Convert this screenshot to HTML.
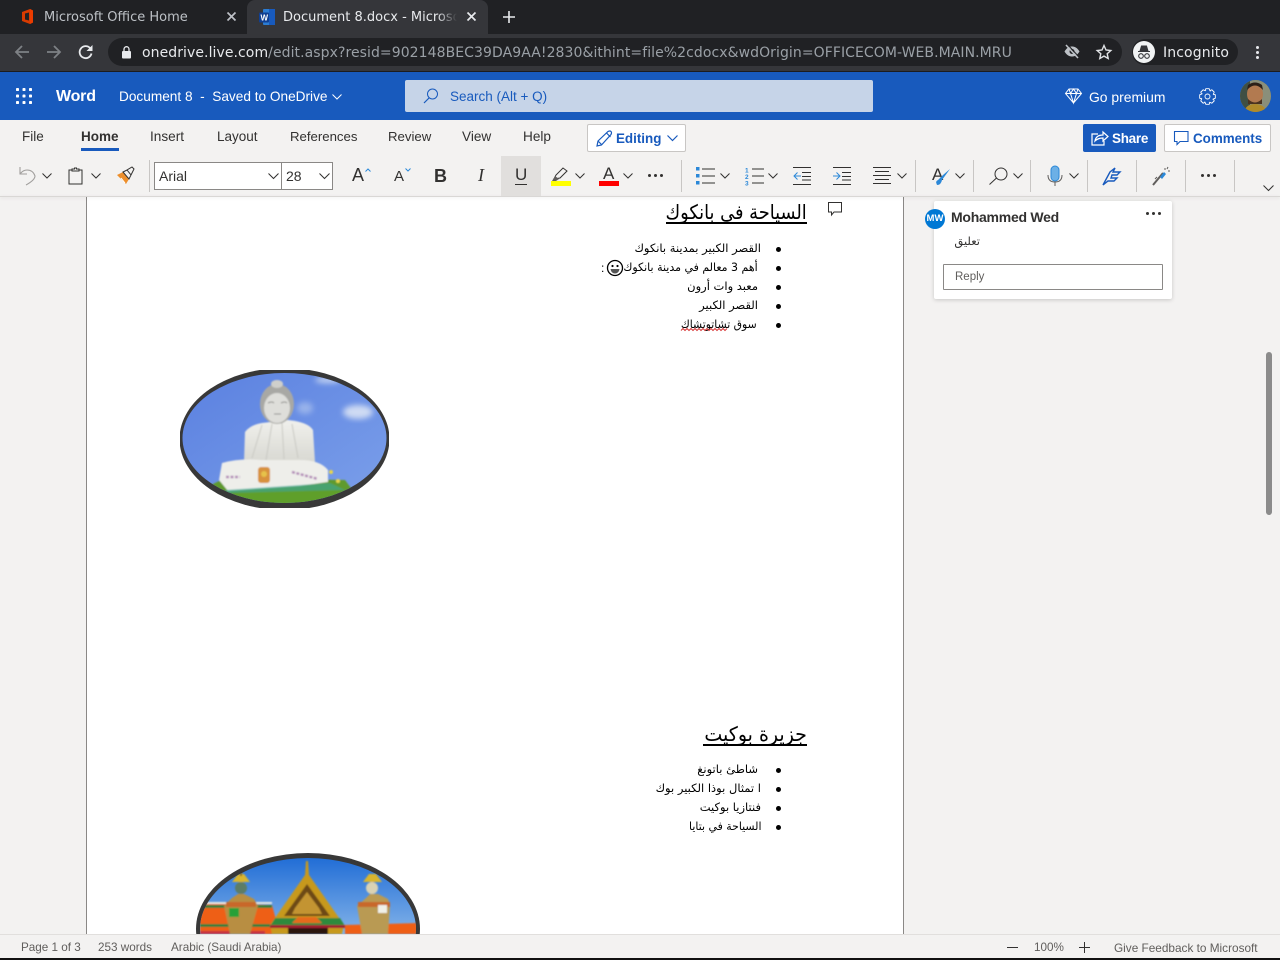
<!DOCTYPE html>
<html lang="en"><head><meta charset="utf-8"><title>Document 8.docx - Microsoft Word</title>
<style>
html,body{margin:0;padding:0;width:1280px;height:960px;overflow:hidden;background:#f3f2f1}
body{position:relative;font-family:"Liberation Sans",sans-serif;color:#323130}
.a{position:absolute}
.t{position:absolute;white-space:nowrap;line-height:20px}
.d{font-family:"DejaVu Sans",sans-serif}
.sep{position:absolute;width:1px;top:160px;height:32px;background:#c8c6c4}
svg{position:absolute;overflow:visible}
.ar{position:absolute;white-space:nowrap;direction:rtl;color:#000;font-family:"DejaVu Sans",sans-serif;transform-origin:right center;text-align:right}
.bul{position:absolute;width:5px;height:5px;border-radius:50%;background:#000;left:776px}
</style></head><body>

<!-- document area -->
<div class="a" style="left:86px;top:196px;width:818px;height:738px;background:#fff;border-left:1px solid #8a8886;border-right:1px solid #8a8886;box-sizing:border-box"></div>

<svg style="left:0;top:0" width="1280" height="960" viewBox="0 0 1280 960">
<defs>
<clipPath id="c1"><rect x="180" y="370" width="209" height="138"/></clipPath>
<clipPath id="c2"><ellipse cx="284.5" cy="438" rx="102" ry="65"/></clipPath>
<clipPath id="c3"><ellipse cx="308" cy="929" rx="108" ry="71"/></clipPath>
<linearGradient id="sky1" x1="0" y1="0" x2="1" y2="1"><stop offset="0" stop-color="#5a80e0"/><stop offset="1" stop-color="#7ca0ea"/></linearGradient>
<linearGradient id="sky2" x1="0" y1="0" x2="0" y2="1"><stop offset="0" stop-color="#1766d4"/><stop offset="1" stop-color="#8ab8ea"/></linearGradient>
<linearGradient id="body" x1="0" y1="0" x2="0" y2="1"><stop offset="0" stop-color="#f0f0ec"/><stop offset="1" stop-color="#d8d8d2"/></linearGradient>
<filter id="b1"><feGaussianBlur stdDeviation=".7"/></filter>
<filter id="b2"><feGaussianBlur stdDeviation="3"/></filter>
</defs>
<g clip-path="url(#c1)">
<ellipse cx="284.5" cy="439" rx="105" ry="71" fill="#383838"/>
<g clip-path="url(#c2)">
<rect x="180" y="370" width="210" height="140" fill="url(#sky1)"/>
<g filter="url(#b2)" fill="#dfe8f6"><ellipse cx="358" cy="412" rx="15" ry="7" opacity=".85"/><ellipse cx="328" cy="380" rx="13" ry="3" opacity=".8"/><ellipse cx="305" cy="408" rx="8" ry="6" opacity=".4"/></g>
<g filter="url(#b1)">
<path d="M205 488 L225 478 L345 480 L360 500 L330 510 L230 510Z" fill="#5e9a2e"/>
<path d="M244 462 L245 432 Q250 425 262 423 L288 420 Q308 422 313 430 L315 462Z" fill="url(#body)"/>
<path d="M262 425L252 458M272 424l-6 36M282 423l2 36M292 424l6 34" stroke="#c9c9c3" stroke-width="1" fill="none"/>
<path d="M222 463 Q240 458 262 460 L300 460 Q320 460 328 470 L328 482 L300 486 L228 491 L219 480Z" fill="#eeeeea"/>
<ellipse cx="277" cy="404" rx="17" ry="20" fill="#a8a8a4"/>
<ellipse cx="277" cy="408" rx="13" ry="15" fill="#dededa"/>
<ellipse cx="277" cy="384" rx="6" ry="4" fill="#cfcfcb"/>
<path d="M268 403q4-2 6 0M281 403q4-2 6 0M274 414h7" stroke="#8f8f8b" fill="none"/>
<rect x="258" y="467" width="12" height="16" rx="3" fill="#d8913c"/>
<circle cx="264" cy="474" r="3" fill="#e6c24a"/>
<path d="M226 477h14M292 472l26 7" stroke="#b38cb8" stroke-width="2.500" stroke-dasharray="3 1.500" fill="none"/>
<path d="M225 490 L330 483 L345 490 L230 495Z" fill="#3aa89a" opacity=".6"/>
<path d="M230 493 L340 490 L345 505 L240 510Z" fill="#5f9f2c"/>
<circle cx="331" cy="472" r="2" fill="#e8d54c"/><circle cx="338" cy="481" r="2" fill="#e8d54c"/>
</g></g></g>

<g>
<ellipse cx="308" cy="929" rx="112" ry="76" fill="#383838"/>
<g clip-path="url(#c3)">
<rect x="190" y="850" width="240" height="90" fill="url(#sky2)"/>
<g filter="url(#b1)">
<path d="M200 903 L272 905 L280 934 L200 934Z" fill="#ee5f12"/>
<path d="M345 925 L420 923 L420 934 L345 934Z" fill="#ee5f12"/>
<path d="M200 905h72v3h-72zM200 924h70v3h-70z" fill="#2f7f3a"/>
<path d="M200 902h72v2h-72z" fill="#e8e8e0"/>
<path d="M200 931h65v3h-65z" fill="#c8303c"/>
<path d="M306 861h2l1 14 35 50-2 9h-70l-2-9 35-50z" fill="#c7991f"/>
<path d="M307 884 L330 916 L284 916Z" fill="#6d4a12"/>
<path d="M295 908 L307 892 L319 908 L322 914 L292 914Z" fill="#c39432"/>
<path d="M275 918 L340 918 L345 926 L270 926Z" fill="#2f8a3c"/>
<path d="M298 917 L316 917 L322 923 L292 923Z" fill="#e66a1c"/>
<path d="M270 925h75v3h-75z" fill="#a01c30"/>
<path d="M288 928h40v6h-40z" fill="#2a130c"/>
<path d="M230 934 L224 906 L232 898 L238 894 L244 894 L254 899 L258 906 L250 934Z" fill="#b88e42"/>
<path d="M226 902h30v5h-30z" fill="#c8682a"/>
<circle cx="241" cy="888" r="6" fill="#5d7d66"/>
<path d="M232 882 L238 874 L244 874 L250 882Z" fill="#d9b52e"/>
<path d="M241 871v5" stroke="#8a6b20" stroke-width="2"/>
<rect x="229" y="908" width="10" height="9" fill="#28a038"/>
<path d="M362 934 L357 906 L366 898 L370 894 L378 894 L388 899 L390 906 L388 934Z" fill="#b99a52"/>
<path d="M358 902h32v5h-32z" fill="#c8682a"/>
<circle cx="372" cy="888" r="6" fill="#d9d2b4"/>
<path d="M363 882 L369 874 L376 874 L382 882Z" fill="#d9b52e"/>
<rect x="378" y="905" width="9" height="8" fill="#f0f0e8"/>
</g></g></g>
</svg>

<!-- doc text -->
<div class="ar" style="right:473px;top:199px;font-size:20px;line-height:26px;transform:scaleX(.89)">السياحة في بانكوك</div>
<div class="a" style="left:666px;top:222px;width:141px;height:2px;background:#000"></div>
<svg style="left:828px;top:202px" width="16" height="15"><path d="M.5.500h13v9.500H6L3.500 13V10H.5z" fill="#fff" stroke="#323130"/></svg>

<div class="bul" style="top:247px"></div><div class="bul" style="top:266px"></div><div class="bul" style="top:285px"></div><div class="bul" style="top:304px"></div><div class="bul" style="top:323px"></div>
<div class="ar" style="right:519px;top:240px;font-size:11.5px;line-height:16px">القصر الكبير بمدينة بانكوك</div>
<div class="ar" style="right:522px;top:259px;font-size:11.5px;line-height:16px;transform:scaleX(.955)">أهم 3 معالم في مدينة بانكوك</div>
<svg style="left:606px;top:259px" width="18" height="18"><circle cx="9" cy="9" r="7.500" fill="#fff" stroke="#000" stroke-width="1.300"/><circle cx="6.500" cy="7" r="1.100"/><circle cx="11.500" cy="7" r="1.100"/><path d="M4.500 10h9c-.5 3-2.300 4.500-4.500 4.500S5 13 4.500 10z" fill="#555"/></svg>
<div class="t" style="left:601px;top:258px;font-size:12px;color:#000">:</div>
<div class="ar" style="right:522px;top:278px;font-size:11.5px;line-height:16px">معبد وات أرون</div>
<div class="ar" style="right:522px;top:297px;font-size:11.5px;line-height:16px">القصر الكبير</div>
<div class="ar" style="right:523px;top:316px;font-size:11.5px;line-height:16px;transform:scaleX(.94)">سوق تشاتوتشاك</div>
<svg style="left:681px;top:328px" width="49" height="4"><path d="M0 2.500l2-2 2 2 2-2 2 2 2-2 2 2 2-2 2 2 2-2 2 2 2-2 2 2 2-2 2 2 2-2 2 2 2-2 2 2 2-2 2 2 2-2 2 2 2-2" fill="none" stroke="#d83b3b"/></svg>

<div class="ar" style="right:473px;top:721px;font-size:20px;line-height:26px;transform:scaleX(.95)">جزيرة بوكيت</div>
<div class="a" style="left:703px;top:744px;width:104px;height:2px;background:#000"></div>
<div class="bul" style="top:768px"></div><div class="bul" style="top:787px"></div><div class="bul" style="top:806px"></div><div class="bul" style="top:825px"></div>
<div class="ar" style="right:522px;top:761px;font-size:11.5px;line-height:16px">شاطئ باتونغ</div>
<div class="ar" style="right:519px;top:780px;font-size:11.5px;line-height:16px">ا تمثال بوذا الكبير بوك</div>
<div class="ar" style="right:519px;top:799px;font-size:11.5px;line-height:16px">فنتازيا بوكيت</div>
<div class="ar" style="right:519px;top:818px;font-size:11.5px;line-height:16px;transform:scaleX(.947)">السياحة في بتايا</div>

<!-- comment card -->
<div class="a" style="left:934px;top:201px;width:238px;height:98px;background:#fff;border-radius:2px;box-shadow:0 1px 4px rgba(0,0,0,.18)"></div>
<div class="a" style="left:925px;top:209px;width:20px;height:20px;border-radius:50%;background:#0078d4;color:#fff;font-size:9.500px;font-weight:bold;line-height:20px;text-align:center">MW</div>
<div class="t" style="left:951px;top:207px;font-size:14px;font-weight:bold;color:#323130;letter-spacing:-.25px">Mohammed Wed</div>
<div class="a" style="left:1146px;top:212px;width:3px;height:3px;border-radius:50%;background:#323130;box-shadow:6px 0 #323130,12px 0 #323130"></div>
<div class="ar" style="right:300px;top:232px;font-size:11.5px;line-height:18px;color:#323130">تعليق</div>
<div class="a" style="left:943px;top:264px;width:220px;height:26px;box-sizing:border-box;border:1px solid #8a8886;border-radius:1px;background:#fff"></div>
<div class="t" style="left:955px;top:267px;font-size:11.500px;color:#605e5c">Reply</div>

<!-- scrollbar -->
<div class="a" style="left:1266px;top:352px;width:6px;height:163px;border-radius:3px;background:#8b8b8b"></div>

<!-- status bar -->
<div class="a" style="left:0;top:934px;width:1280px;height:24px;background:#f3f2f1;border-top:1px solid #e1dfdd;box-sizing:border-box"></div>
<div class="a" style="left:0;top:958px;width:1280px;height:2px;background:#111"></div>
<div class="t" style="left:21px;top:938px;font-size:11.700px;color:#605e5c">Page 1 of 3</div>
<div class="t" style="left:98px;top:938px;font-size:11.700px;color:#605e5c">253 words</div>
<div class="t" style="left:171px;top:938px;font-size:11.700px;color:#605e5c">Arabic (Saudi Arabia)</div>
<div class="a" style="left:1007px;top:947px;width:11px;height:1px;background:#323130"></div>
<div class="t" style="left:1034px;top:938px;font-size:11.700px;color:#605e5c">100%</div>
<div class="a" style="left:1079px;top:947px;width:11px;height:1px;background:#323130"></div>
<div class="a" style="left:1084px;top:942px;width:1px;height:11px;background:#323130"></div>
<div class="t" style="left:1114px;top:938px;font-size:11.800px;color:#605e5c">Give Feedback to Microsoft</div>

<!-- browser chrome -->
<div class="a" style="left:0;top:0;width:1280px;height:34px;background:#202124"></div>
<div class="a" style="left:247px;top:0;width:241px;height:34px;background:#35363a;border-radius:8px 8px 0 0"></div>
<div class="a" style="left:0;top:34px;width:1280px;height:37px;background:#35363a"></div>
<div class="a" style="left:0;top:71px;width:1280px;height:1px;background:#1c1c1e"></div>
<svg style="left:20px;top:8px" width="16" height="17"><path d="M2 4L10 1l3 1.500v12L10 16 2 13z" fill="#d83b01"/><path d="M5 5.500l4-1v8l-4-1z" fill="#202124"/><path d="M10 1l3 1.500v12L10 16z" fill="#eb3c00"/></svg>
<div class="t d" style="left:44px;top:8px;font-size:13px;color:#bdc1c6">Microsoft Office Home</div>
<svg style="left:226px;top:11px" width="11" height="11"><path d="M1.500 1.500l8 8M9.500 1.500l-8 8" stroke="#bdc1c6" stroke-width="1.700"/></svg>
<svg style="left:259px;top:8px" width="16" height="18"><rect x="4" y="1" width="12" height="16" rx="1" fill="#2b7cd3"/><rect x="10" y="1" width="6" height="16" fill="#185abd"/><rect x="0" y="4.500" width="10" height="10" rx="1" fill="#103f91"/><text x="1.500" y="12.500" font-size="8" font-weight="bold" fill="#fff" font-family="Liberation Sans">W</text></svg>
<div class="a" style="left:283px;top:0;width:174px;height:34px;overflow:hidden"><div class="t d" style="left:0;top:8px;font-size:13px;color:#e8eaed">Document 8.docx - Microsoft Word</div></div>
<div class="a" style="left:437px;top:0;width:20px;height:34px;background:linear-gradient(90deg,rgba(53,54,58,0),#35363a)"></div>
<svg style="left:466px;top:11px" width="11" height="11"><path d="M1.500 1.500l8 8M9.500 1.500l-8 8" stroke="#e8eaed" stroke-width="1.700"/></svg>
<svg style="left:503px;top:11px" width="12" height="12"><path d="M6 0v12M0 6h12" stroke="#e8eaed" stroke-width="1.600"/></svg>
<svg style="left:14px;top:44px" width="16" height="16"><path d="M15 8H2M8 2L2 8l6 6" fill="none" stroke="#7e8185" stroke-width="1.800"/></svg>
<svg style="left:46px;top:44px" width="16" height="16"><path d="M1 8h13M8 2l6 6-6 6" fill="none" stroke="#7e8185" stroke-width="1.800"/></svg>
<svg style="left:78px;top:44px" width="16" height="16"><path d="M13.500 9.500A6 6 0 1 1 12 4" fill="none" stroke="#e8eaed" stroke-width="1.800"/><path d="M14.500 1v6h-6z" fill="#e8eaed"/></svg>
<div class="a" style="left:108px;top:38px;width:1014px;height:28px;border-radius:14px;background:#202124"></div>
<svg style="left:122px;top:46px" width="10" height="13"><rect x="0" y="5" width="9" height="7.500" rx="1" fill="#e8eaed"/><path d="M2 5.500V3.200a2.500 2.500 0 0 1 5 0v2.300" fill="none" stroke="#e8eaed" stroke-width="1.300"/></svg>
<div class="t d" style="left:142px;top:43px;font-size:14px;color:#9aa0a6;letter-spacing:.07px"><span style="color:#e8eaed">onedrive.live.com</span>/edit.aspx?resid=902148BEC39DA9AA!2830&amp;ithint=file%2cdocx&amp;wdOrigin=OFFICECOM-WEB.MAIN.MRU</div>
<svg style="left:1064px;top:44px" width="16" height="15"><path d="M.5 7.500C3 3.500 5.500 2.500 8 2.500s5 1 7.500 5C13 11.500 10.500 12.500 8 12.500s-5-1-7.500-5z" fill="#bdc1c6"/><circle cx="8" cy="7.500" r="2.500" fill="#202124"/><path d="M2 1l12 13" stroke="#bdc1c6" stroke-width="1.600"/><path d="M3.500 .5l12 13" stroke="#202124" stroke-width="1"/></svg>
<svg style="left:1096px;top:44px" width="16" height="16"><path d="M8 1.500l2 4.500 4.800.500-3.600 3.200 1 4.800L8 12.100l-4.200 2.400 1-4.800L1.200 6.500 6 6z" fill="none" stroke="#e0e2e5" stroke-width="1.400"/></svg>
<div class="a" style="left:1132px;top:39px;width:106px;height:26px;border-radius:13px;background:#202124"></div>
<div class="a" style="left:1133px;top:41px;width:22px;height:22px;border-radius:50%;background:#f1f3f4"></div>
<svg style="left:1133px;top:41px" width="22" height="22"><path d="M7 10l1.500-5h5L15 10zM5 10.500h12" fill="#35363a" stroke="#35363a"/><circle cx="8" cy="15" r="2.300" fill="none" stroke="#35363a" stroke-width="1.100"/><circle cx="14" cy="15" r="2.300" fill="none" stroke="#35363a" stroke-width="1.100"/></svg>
<div class="t d" style="left:1163px;top:43px;font-size:14px;color:#e8eaed;letter-spacing:.12px">Incognito</div>
<div class="a" style="left:1256px;top:46px;width:3px;height:3px;border-radius:50%;background:#e8eaed;box-shadow:0 5px #e8eaed,0 10px #e8eaed"></div>

<!-- word header -->
<div class="a" style="left:0;top:72px;width:1280px;height:48px;background:#185abd"></div>
<svg style="left:16px;top:88px" width="16" height="16" fill="#fff"><rect x="0" y="0" width="3" height="3" rx=".8"/><rect x="6.500" y="0" width="3" height="3" rx=".8"/><rect x="13" y="0" width="3" height="3" rx=".8"/><rect x="0" y="6.500" width="3" height="3" rx=".8"/><rect x="6.500" y="6.500" width="3" height="3" rx=".8"/><rect x="13" y="6.500" width="3" height="3" rx=".8"/><rect x="0" y="13" width="3" height="3" rx=".8"/><rect x="6.500" y="13" width="3" height="3" rx=".8"/><rect x="13" y="13" width="3" height="3" rx=".8"/></svg>
<div class="t" style="left:56px;top:87px;font-size:16px;font-weight:bold;color:#fff;letter-spacing:-.2px">Word</div>
<div class="t" style="left:119px;top:87px;font-size:13.650px;color:#fff">Document 8&nbsp; -&nbsp; Saved to OneDrive</div>
<svg style="left:332px;top:94px" width="10" height="6"><path d="M.5.500L5 5 9.500.500" fill="none" stroke="#fff"/></svg>
<div class="a" style="left:405px;top:80px;width:468px;height:32px;background:#c6d4e8;border-radius:2px"></div>
<svg style="left:423px;top:88px" width="16" height="16"><circle cx="9.500" cy="6" r="5" fill="none" stroke="#185abd"/><path d="M6 10L1 15" stroke="#185abd" stroke-width="1.200"/></svg>
<div class="t" style="left:450px;top:87px;font-size:13.500px;color:#185abd">Search (Alt + Q)</div>
<svg style="left:1065px;top:88px" width="17" height="16"><path d="M4 1h9l3.500 4.500L8.500 15 .5 5.500zM.5 5.500h16M5.500 5.500l3 9.500 3-9.500M4 1l1.500 4.500L8.500 1l3 4.500L13 1" fill="none" stroke="#fff"/></svg>
<div class="t" style="left:1089px;top:87px;font-size:13.900px;color:#fff">Go premium</div>
<svg style="left:1199px;top:88px" width="17" height="17"><g transform="translate(8.500 8.500)" fill="none" stroke="#fff" stroke-width=".9"><circle r="2.500"/><path d="M-2.520-5.660L-1.660-7.830L1.660-7.830L2.520-5.660L2.220-5.780"/><path transform="rotate(45)" d="M-2.520-5.660L-1.660-7.830L1.660-7.830L2.520-5.660L2.220-5.780"/><path transform="rotate(90)" d="M-2.520-5.660L-1.660-7.830L1.660-7.830L2.520-5.660L2.220-5.780"/><path transform="rotate(135)" d="M-2.520-5.660L-1.660-7.830L1.660-7.830L2.520-5.660L2.220-5.780"/><path transform="rotate(180)" d="M-2.520-5.660L-1.660-7.830L1.660-7.830L2.520-5.660L2.220-5.780"/><path transform="rotate(225)" d="M-2.520-5.660L-1.660-7.830L1.660-7.830L2.520-5.660L2.220-5.780"/><path transform="rotate(270)" d="M-2.520-5.660L-1.660-7.830L1.660-7.830L2.520-5.660L2.220-5.780"/><path transform="rotate(315)" d="M-2.520-5.660L-1.660-7.830L1.660-7.830L2.520-5.660L2.220-5.780"/></g></svg>
<div class="a" style="left:1240px;top:80px;width:31px;height:32px;border-radius:50%;overflow:hidden;background:#5b6b50">
<svg style="left:0;top:0" width="31" height="32"><rect width="31" height="32" fill="#8a8f7a"/><rect x="0" y="0" width="10" height="32" fill="#3f4f44"/><ellipse cx="15" cy="14" rx="8" ry="10" fill="#b27a50"/><path d="M7 10q8-9 16 0l-1-5q-7-5-14 0z" fill="#2c2018"/><path d="M8 19q7 7 14 0v5H8z" fill="#4a3220"/><path d="M4 32q2-8 11-8t12 8z" fill="#b08a2a"/></svg></div>

<!-- ribbon tabs -->
<div class="t" style="left:22px;top:127px;font-size:13.500px;color:#323130">File</div>
<div class="t" style="left:81px;top:127px;font-size:13.500px;font-weight:bold;color:#323130">Home</div>
<div class="a" style="left:81px;top:148px;width:38px;height:3px;background:#185abd"></div>
<div class="t" style="left:150px;top:127px;font-size:13.600px;color:#323130">Insert</div>
<div class="t" style="left:217px;top:127px;font-size:13.500px;color:#323130">Layout</div>
<div class="t" style="left:290px;top:127px;font-size:13.200px;color:#323130">References</div>
<div class="t" style="left:388px;top:127px;font-size:13.200px;color:#323130">Review</div>
<div class="t" style="left:462px;top:127px;font-size:13.600px;color:#323130">View</div>
<div class="t" style="left:523px;top:127px;font-size:13.600px;color:#323130">Help</div>

<div class="a" style="left:587px;top:124px;width:99px;height:28px;box-sizing:border-box;background:#fff;border:1px solid #c8c6c4;border-radius:2px"></div>
<svg style="left:596px;top:130px" width="17" height="17"><path d="M1 16l1-5L12 1.500q2-1 3 0t0 3L5.500 15zM2 11l4 4M10.500 3l4 4" fill="none" stroke="#185abd" stroke-width="1.200"/></svg>
<div class="t" style="left:616px;top:129px;font-size:13.400px;font-weight:bold;color:#185abd">Editing</div>
<svg style="left:667px;top:135px" width="11" height="7"><path d="M.5.500L5.500 5.500 10.500.500" fill="none" stroke="#185abd" stroke-width="1.200"/></svg>

<div class="a" style="left:1083px;top:124px;width:73px;height:28px;background:#185abd;border-radius:2px"></div>
<svg style="left:1091px;top:130px" width="18" height="16"><path d="M7 4H1v11h12v-4" fill="none" stroke="#fff" stroke-width="1.200"/><path d="M4 11q1-6 8-6V2l5 4.500-5 4.500V8q-5 0-8 3z" fill="none" stroke="#fff" stroke-width="1.200"/></svg>
<div class="t" style="left:1112px;top:129px;font-size:13.500px;font-weight:bold;color:#fff;letter-spacing:-.3px">Share</div>
<div class="a" style="left:1164px;top:124px;width:107px;height:28px;box-sizing:border-box;background:#fff;border:1px solid #c8c6c4;border-radius:2px"></div>
<svg style="left:1174px;top:131px" width="15" height="15"><path d="M.5.500h13.500v10H6L3 13.500v-3H.5z" fill="none" stroke="#185abd" stroke-width="1.100"/></svg>
<div class="t" style="left:1193px;top:129px;font-size:13.400px;font-weight:bold;color:#185abd">Comments</div>

<!-- toolbar -->
<div class="a" style="left:0;top:196px;width:1280px;height:1px;background:#d9d7d5;box-shadow:0 1px 3px rgba(0,0,0,.12)"></div>
<svg style="left:19px;top:166px" width="18" height="20"><path d="M1 1v7h7M1 8q3-4 7-4 6 0 8 6 0 4-9 9" fill="none" stroke="#a19f9d" stroke-width="1.100"/></svg>
<svg style="left:42px;top:173px" width="10" height="6"><path d="M.5.500L5 5 9.500.500" fill="none" stroke="#323130"/></svg>
<svg style="left:68px;top:167px" width="16" height="18"><path d="M4 3H1v14h13V3h-3" fill="none" stroke="#323130"/><path d="M4 4V2h2.500V1h2v1H11v2z" fill="none" stroke="#323130"/></svg>
<svg style="left:91px;top:173px" width="10" height="6"><path d="M.5.500L5 5 9.500.500" fill="none" stroke="#323130"/></svg>
<svg style="left:116px;top:167px" width="19" height="18"><path d="M1 8l6-3 6 7-3 5z" fill="#ed8f2c"/><path d="M5 11l4 5" stroke="#fff"/><path d="M7 5l4-2 4 5-2 4zM11 3l5-3 2 2-3 6" fill="none" stroke="#323130"/></svg>
<div class="sep" style="left:149px"></div>

<div class="a" style="left:154px;top:162px;width:179px;height:28px;box-sizing:border-box;background:#fff;border:1px solid #8a8886"></div>
<div class="a" style="left:281px;top:162px;width:1px;height:28px;background:#8a8886"></div>
<div class="t" style="left:159px;top:166px;font-size:14px;color:#323130">Arial</div>
<svg style="left:268px;top:173px" width="11" height="6"><path d="M.5.500L5.500 5.500 10.500.500" fill="none" stroke="#323130"/></svg>
<div class="t" style="left:286px;top:166px;font-size:14px;color:#323130">28</div>
<svg style="left:319px;top:173px" width="11" height="6"><path d="M.5.500L5.500 5.500 10.500.500" fill="none" stroke="#323130"/></svg>

<div class="t" style="left:352px;top:165px;font-size:18px;color:#323130">A</div>
<svg style="left:365px;top:168px" width="6" height="4"><path d="M.5 3.500L3 1l2.500 2.500" fill="none" stroke="#2b88d8"/></svg>
<div class="t" style="left:394px;top:167px;font-size:15px;color:#323130">A</div>
<svg style="left:405px;top:168px" width="6" height="4"><path d="M.5.500L3 3 5.500.500" fill="none" stroke="#2b88d8"/></svg>
<div class="t" style="left:434px;top:166px;font-size:18px;font-weight:bold;color:#323130">B</div>
<div class="t" style="left:478px;top:165px;font-size:18px;font-style:italic;font-family:'Liberation Serif',serif;color:#323130">I</div>
<div class="a" style="left:501px;top:156px;width:40px;height:40px;background:#e1dfdd"></div>
<div class="t" style="left:515px;top:165px;font-size:17px;color:#323130">U</div>
<div class="a" style="left:515px;top:184px;width:12px;height:1px;background:#323130"></div>

<svg style="left:552px;top:167px" width="18" height="15"><path d="M2 12l2-4 7-7 4 3-7 7z" fill="none" stroke="#323130"/><path d="M0 14l3-5 4 3-3 2z" fill="#605e5c"/></svg>
<div class="a" style="left:551px;top:181px;width:20px;height:5px;background:#ff0"></div>
<svg style="left:575px;top:173px" width="10" height="6"><path d="M.5.500L5 5 9.500.500" fill="none" stroke="#323130"/></svg>
<div class="t" style="left:603px;top:164px;font-size:17px;color:#323130">A</div>
<div class="a" style="left:599px;top:181px;width:20px;height:5px;background:#f00"></div>
<svg style="left:623px;top:173px" width="10" height="6"><path d="M.5.500L5 5 9.500.500" fill="none" stroke="#323130"/></svg>
<div class="a" style="left:648px;top:174px;width:3px;height:3px;border-radius:50%;background:#323130;box-shadow:6px 0 #323130,12px 0 #323130"></div>
<div class="sep" style="left:681px"></div>

<svg style="left:696px;top:167px" width="19" height="18"><path d="M6 2h13M6 9h13M6 16h13" stroke="#323130"/><rect x="0" y="0" width="3.500" height="3.500" fill="#2b88d8"/><rect x="0" y="7" width="3.500" height="3.500" fill="#2b88d8"/><rect x="0" y="14" width="3.500" height="3.500" fill="#2b88d8"/></svg>
<svg style="left:720px;top:173px" width="10" height="6"><path d="M.5.500L5 5 9.500.500" fill="none" stroke="#323130"/></svg>
<svg style="left:745px;top:166px" width="19" height="20"><path d="M7 3h12M7 10h12M7 17h12" stroke="#323130"/><text x="0" y="6.500" font-size="6.500" font-weight="bold" fill="#2b88d8" font-family="Liberation Sans">1</text><text x="0" y="13" font-size="6.500" font-weight="bold" fill="#2b88d8" font-family="Liberation Sans">2</text><text x="0" y="19.500" font-size="6.500" font-weight="bold" fill="#2b88d8" font-family="Liberation Sans">3</text></svg>
<svg style="left:768px;top:173px" width="10" height="6"><path d="M.5.500L5 5 9.500.500" fill="none" stroke="#323130"/></svg>
<svg style="left:793px;top:167px" width="18" height="18"><path d="M0 .5h18M9 5.500h9M9 9.500h9M9 13h9M0 17.500h18" stroke="#323130"/><path d="M8 9H1M4.500 5.500L1 9l3.500 3.500" fill="none" stroke="#2b88d8"/></svg>
<svg style="left:833px;top:167px" width="18" height="18"><path d="M0 .5h18M9 5.500h9M9 9.500h9M9 13h9M0 17.500h18" stroke="#323130"/><path d="M0 9h7M3.500 5.500L7 9l-3.500 3.500" fill="none" stroke="#2b88d8"/></svg>
<svg style="left:873px;top:167px" width="18" height="18"><path d="M0 .5h18M2 4.500h14M0 8.500h18M2 12.500h14M0 16.500h18" stroke="#323130"/></svg>
<svg style="left:897px;top:173px" width="10" height="6"><path d="M.5.500L5 5 9.500.500" fill="none" stroke="#323130"/></svg>
<div class="sep" style="left:915px"></div>

<div class="t" style="left:932px;top:165px;font-size:17px;color:#323130">A</div>
<svg style="left:934px;top:168px" width="18" height="18"><path d="M3 17q4 0 5-5l8-11-7 6-5 5q-3 1-1 5z" fill="#2b88d8"/></svg>
<svg style="left:955px;top:173px" width="10" height="6"><path d="M.5.500L5 5 9.500.500" fill="none" stroke="#323130"/></svg>
<div class="sep" style="left:973px"></div>
<svg style="left:989px;top:167px" width="19" height="18"><circle cx="12" cy="7" r="6" fill="none" stroke="#323130"/><path d="M7.500 11L.5 17.500" stroke="#323130"/></svg>
<svg style="left:1013px;top:173px" width="10" height="6"><path d="M.5.500L5 5 9.500.500" fill="none" stroke="#323130"/></svg>
<div class="sep" style="left:1030px"></div>
<svg style="left:1047px;top:165px" width="16" height="22"><rect x="4" y="1" width="8" height="15" rx="4" fill="#6cb0e6" stroke="#2b88d8"/><path d="M1 10q0 7 7 7t7-7M8 17v4" fill="none" stroke="#605e5c"/></svg>
<svg style="left:1069px;top:173px" width="10" height="6"><path d="M.5.500L5 5 9.500.500" fill="none" stroke="#323130"/></svg>
<div class="sep" style="left:1087px"></div>
<svg style="left:1102px;top:167px" width="19" height="19"><path d="M1 18L8 5l5-4-2 4h7l-3 3h-5l-1 3h6l-3 3H6z" fill="none" stroke="#185abd" stroke-width="1.400"/></svg>
<div class="sep" style="left:1136px"></div>
<svg style="left:1152px;top:166px" width="18" height="20"><path d="M1 19L11 7" stroke="#605e5c" stroke-width="2"/><path d="M8 11l4-5 2 2-4 5z" fill="#2b88d8"/><path d="M13 2v2M16 5h2M16 1l-1 2M3 13l2-2" stroke="#605e5c"/></svg>
<div class="sep" style="left:1185px"></div>
<div class="a" style="left:1201px;top:174px;width:3px;height:3px;border-radius:50%;background:#323130;box-shadow:6px 0 #323130,12px 0 #323130"></div>
<div class="sep" style="left:1234px"></div>
<svg style="left:1263px;top:185px" width="11" height="7"><path d="M.5.500L5.500 5.500 10.500.500" fill="none" stroke="#323130"/></svg>
</body></html>
